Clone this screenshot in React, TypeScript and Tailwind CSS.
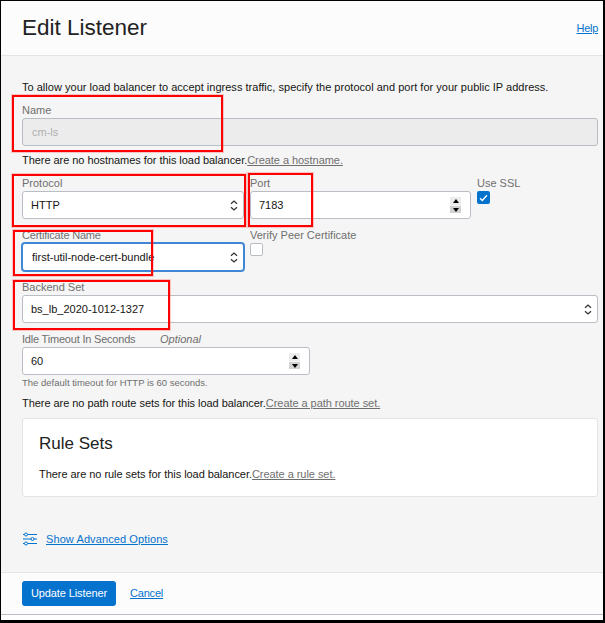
import type { ReactNode } from 'react';

function Field({ label, className, children }: { label: ReactNode; className: string; children: ReactNode }) {
  return (
    <div className={className}>
      <div className="h-[16px] text-[11px] leading-[16px] text-[#6f6f6f] whitespace-nowrap">{label}</div>
      {children}
    </div>
  );
}

function Chevrons() {
  return (
    <svg className="absolute right-[6px] top-[9px] pointer-events-none" width="8" height="11" viewBox="0 0 8 11" fill="none" stroke="#333" strokeWidth="1.3">
      <path d="M1 3.7 4 1l3 2.7" />
      <path d="M1 7.3 4 10l3-2.7" />
    </svg>
  );
}

function SelectBox({ value, focused }: { value: string; focused?: boolean }) {
  return (
    <div className="relative">
      <select
        defaultValue={value}
        className={`block w-full h-[28px] appearance-none rounded-[3px] bg-white text-[11px] text-[#161513] outline-none border ${
          focused ? 'pl-[9px] border-[#3f86d6] shadow-[0_0_0_1px_#3f86d6]' : 'pl-[8px] border-[#b9bdc4]'
        }`}
      >
        <option>{value}</option>
      </select>
      <Chevrons />
    </div>
  );
}

function Spinner() {
  return (
    <div className="absolute right-[10px] top-[6px] w-[11px] h-[16px] flex flex-col gap-px bg-[#f4f4f4]">
      <div className="h-[8px] bg-[#ececec] flex items-center justify-center">
        <div className="w-0 h-0 border-x-[3px] border-x-transparent border-b-[4px] border-b-black" />
      </div>
      <div className="h-[7px] bg-[#d2d2d2] flex items-center justify-center">
        <div className="w-0 h-0 border-x-[3px] border-x-transparent border-t-[4px] border-t-black" />
      </div>
    </div>
  );
}

function NumberBox({ value }: { value: string }) {
  return (
    <div className="relative">
      <input
        readOnly
        value={value}
        className="block w-full h-[28px] rounded-[3px] border border-[#b9bdc4] bg-white pl-[8px] text-[11px] text-[#161513] outline-none"
      />
      <Spinner />
    </div>
  );
}

function Note({ text, link }: { text: string; link: string }) {
  return (
    <p className="text-[11px] leading-[16px] tracking-[-0.05px] text-[#161513] whitespace-nowrap">
      {text}
      <a href="#" className="text-[#6f6f6f] underline">{link}</a>
    </p>
  );
}

function Mark({ className }: { className: string }) {
  return <div className={`absolute border-2 border-[#ff0000] shadow-[0_0_0_1px_rgba(255,0,0,0.2)] pointer-events-none ${className}`} />;
}

export default function App() {
  return (
    <div className="relative w-[605px] h-[623px] overflow-hidden bg-white border-l border-t border-black font-['Liberation_Sans',Arial,sans-serif]">
      <div className="w-[602px] h-[619px] bg-[#f5f5f5] flex flex-col">
        {/* Header */}
        <header className="h-[55px] shrink-0 bg-[#fcfcfc] border-b border-[#e4e4e4] pl-[21px] pr-[5px] flex items-center justify-between">
          <h1 className="text-[22.5px] leading-[28px] text-[#222] -mt-[1px]">Edit Listener</h1>
          <a href="#" className="text-[11px] tracking-[-0.3px] text-[#0572ce] underline">Help</a>
        </header>

        {/* Form */}
        <main className="flex-1 pt-[23px] pl-[21px] pr-[5px]">
          <p className="h-[16px] text-[11px] leading-[16px] tracking-[0.02px] text-[#161513] whitespace-nowrap">
            To allow your load balancer to accept ingress traffic, specify the protocol and port for your public IP address.
          </p>

          <Field label="Name" className="mt-[7px]">
            <input
              readOnly
              value="cm-ls"
              className="block w-[576px] h-[28px] rounded-[3px] border border-[#b9bdc4] bg-[#ececec] pl-[9px] text-[11px] text-[#b0b0b0] outline-none"
            />
          </Field>
          <div className="mt-[6px]">
            <Note text="There are no hostnames for this load balancer." link="Create a hostname." />
          </div>

          <div className="mt-[7px] flex gap-[6px]">
            <Field label="Protocol" className="w-[222px]"><SelectBox value="HTTP" /></Field>
            <Field label="Port" className="w-[221px]"><NumberBox value="7183" /></Field>
            <Field label="Use SSL" className="w-[60px]">
              <div className="w-[13px] h-[13px] rounded-[2px] bg-[#0572ce] flex items-center justify-center">
                <svg width="9" height="8" viewBox="0 0 9 8" fill="none" stroke="#fff" strokeWidth="1.3"><path d="M1 4.2 3.3 6.5 8 1.2" /></svg>
              </div>
            </Field>
          </div>

          <div className="mt-[8px] flex gap-[6px]">
            <Field label={<span className="tracking-[-0.2px]">Certificate Name</span>} className="w-[222px]">
              <SelectBox value="first-util-node-cert-bundle" focused />
            </Field>
            <Field label="Verify Peer Certificate" className="w-[221px]">
              <div className="w-[13px] h-[13px] rounded-[2px] border border-[#b9bdc4] bg-white" />
            </Field>
          </div>

          <Field label="Backend Set" className="mt-[8px] w-[576px]"><SelectBox value="bs_lb_2020-1012-1327" /></Field>

          <Field
            label={<span className="flex"><span className="w-[138px] tracking-[-0.2px]">Idle Timeout In Seconds</span><i>Optional</i></span>}
            className="mt-[8px] w-[288px]"
          >
            <NumberBox value="60" />
          </Field>
          <p className="mt-[2px] h-[12px] text-[9.5px] leading-[12px] text-[#6f6f6f]">The default timeout for HTTP is 60 seconds.</p>

          <div className="mt-[6px]">
            <Note text="There are no path route sets for this load balancer." link="Create a path route set." />
          </div>

          <section className="mt-[7px] w-[576px] h-[79px] rounded-[3px] bg-white border border-[#e4e4e4] pt-[15px] pl-[16px]">
            <h2 className="text-[17px] leading-[20px] text-[#222]">Rule Sets</h2>
            <div className="mt-[12px]">
              <Note text="There are no rule sets for this load balancer." link="Create a rule set." />
            </div>
          </section>

          <div className="mt-[34px] ml-[1px] flex items-center gap-[9px]">
            <svg width="14" height="14" viewBox="0 0 14 14" fill="none" stroke="#0572ce" strokeWidth="1">
              <path d="M0 2.5h1.5M4.5 2.5H14M0 7h8M11 7h3M0 11.5h1.5M4.5 11.5H14" />
              <circle cx="3" cy="2.5" r="1.5" />
              <circle cx="9.5" cy="7" r="1.5" />
              <circle cx="3" cy="11.5" r="1.5" />
            </svg>
            <a href="#" className="text-[11px] leading-[16px] tracking-[0.1px] text-[#0572ce] underline">Show Advanced Options</a>
          </div>
        </main>

        {/* Footer */}
        <footer className="h-[42px] shrink-0 bg-[#fcfcfc] border-t border-[#e4e4e4] pl-[21px] pt-[8px] flex items-start gap-[14px]">
          <button className="w-[94px] h-[25px] rounded-[3px] bg-[#0572ce] text-[11px] tracking-[-0.1px] text-white">Update Listener</button>
          <a href="#" className="mt-[4px] text-[11px] leading-[16px] tracking-[-0.2px] text-[#0572ce] underline">Cancel</a>
        </footer>
        <div className="h-[1px] shrink-0 bg-[#b9bdc4]" />
        <div className="h-[5px] shrink-0 bg-white" />
      </div>
      <div className="absolute left-[602px] top-0 w-[2px] h-full bg-black" />
      <div className="absolute left-0 top-[619px] w-full h-[3px] bg-black" />

      {/* Red annotation boxes */}
      <Mark className="left-[11px] top-[94px] w-[211px] h-[57px]" />
      <Mark className="left-[11px] top-[173px] w-[234px] h-[53px]" />
      <Mark className="left-[247px] top-[172px] w-[65px] h-[54px]" />
      <Mark className="left-[12px] top-[229px] w-[140px] h-[46px]" />
      <Mark className="left-[12px] top-[279px] w-[157px] h-[50px]" />
    </div>
  );
}
